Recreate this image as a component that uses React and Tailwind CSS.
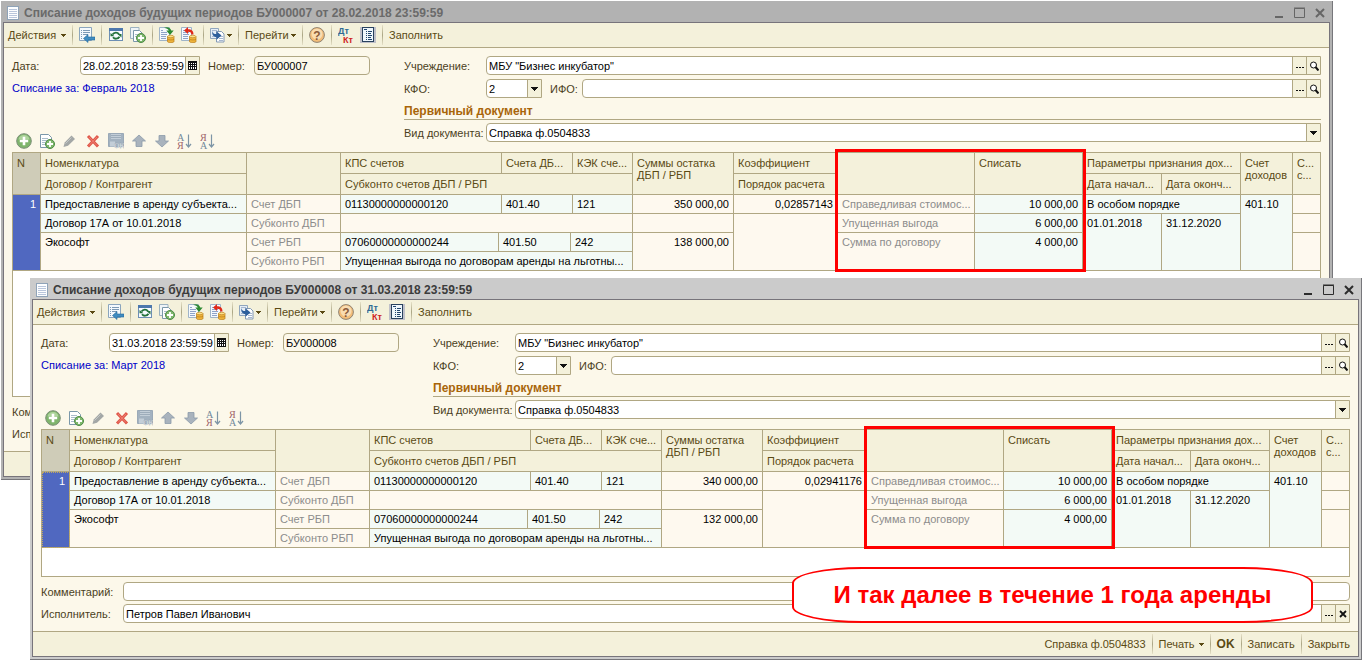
import React, { useId } from 'react';
import clsx from 'clsx';

const documents = [
  {
    title: 'Списание доходов будущих периодов БУ000007 от 28.02.2018 23:59:59',
    date: '28.02.2018 23:59:59',
    number: 'БУ000007',
    period: 'Списание за: Февраль 2018',
    balances: ['350 000,00', '138 000,00'],
    ratio: '0,02857143',
  },
  {
    title: 'Списание доходов будущих периодов БУ000008 от 31.03.2018 23:59:59',
    date: '31.03.2018 23:59:59',
    number: 'БУ000008',
    period: 'Списание за: Март 2018',
    balances: ['340 000,00', '132 000,00'],
    ratio: '0,02941176',
  },
];

/* ---------- Icons ---------- */

const Svg = ({ children, size = 16, className }) => (
  <svg viewBox={`0 0 ${size} ${size}`} width={size} height={size} className={clsx('shrink-0', className)} aria-hidden="true">
    {children}
  </svg>
);

const Caret = () => (
  <svg viewBox="0 0 5 3" width="5" height="3" className="shrink-0" aria-hidden="true">
    <path d="M0 0h5v1H0zM1 1h3v1H1zM2 2h1v1H2z" fill="currentColor" />
  </svg>
);

const SheetIcon = () => (
  <Svg size={14}>
    <rect x="1.5" y="0.5" width="11" height="13" fill="#fdfeff" stroke="#8fa3b8" />
    <path d="M3 3.5h8M3 5.5h8M3 7.5h8M3 9.5h8M3 11.5h8" stroke="#b9c6dc" />
  </Svg>
);

const FormArrowIcon = () => (
  <Svg>
    <path d="M.5.5h12v13H.5z" fill="#f4f9fd" stroke="#8aa5bd" />
    <path d="M2 3.5h1M4 3.5h7M2 5.5h1M4 5.5h7M2 7.500h1M4 7.500h5M2 9.500h1M2 11.500h1" stroke="#7d9ab5" />
    <path d="M4.500 11.500L9 7.500v2.500h7v3H9v2.500z" fill="#3f8cc0" stroke="#22689c" strokeWidth=".6" />
  </Svg>
);

const RefreshIcon = () => (
  <Svg>
    <rect x="1.5" y="1.5" width="13" height="12" fill="#f7fbff" stroke="#6d8fb4" />
    <path d="M1 1h14v3H1z" fill="#4d78ad" />
    <path d="M4.500 7.500C6 5 9.500 5 11 7.200" fill="none" stroke="#23713a" strokeWidth="1.800" />
    <path d="M2.500 9.300V6L6.500 9.300zM13.500 7v3.500L9.500 7z" fill="#23713a" />
    <path d="M11.500 9.800C10 12.300 6.500 12.300 5 10.200" fill="none" stroke="#23713a" strokeWidth="1.800" />
  </Svg>
);

const DocPlusIcon = ({ stacked }) => (
  <Svg>
    {stacked && <path d="M.5.5h8.500v11H.5z" fill="#eef4f7" stroke="#9cb2c0" />}
    {stacked ? (
      <path d="M3.5 3.5h6l3 3v8h-9z" fill="#fff" stroke="#7b98aa" />
    ) : (
      <path d="M1.5 1.5h8l3 3v10h-11z" fill="#fff" stroke="#7b98aa" />
    )}
    <path d={stacked ? 'M5 7.500h4M5 9.500h2' : 'M3 5.500h6M3 7.500h5M3 9.500h3M3 11.500h3'} stroke="#a9bccb" />
    <circle cx="11" cy="11" r="4.500" fill="#7fb86c" stroke="#4c8a45" />
    <path d="M11 8v6M8 11h6" stroke="#fff" strokeWidth="1.800" />
  </Svg>
);

const PostIcon = ({ cancel }) => (
  <Svg>
    <path d="M.5.5h10v13H.5z" fill="#f5f9fd" stroke="#9fb4c8" />
    <path d="M2 3.500h2M2 5.500h6M2 7.500h6M2 9.500h5M2 11.500h5" stroke="#8ea3c9" />
    <path d="M8.500 9.500H15v5c0 1.500-6.500 1.500-6.500 0z" fill="#eeb43c" stroke="#b97a14" strokeWidth=".7" />
    <ellipse cx="11.700" cy="9.500" rx="3.200" ry="1.200" fill="#fbe08b" stroke="#b97a14" strokeWidth=".6" />
    <path d="M8.500 12.200c1 1 5.500 1 6.500 0" fill="none" stroke="#b97a14" strokeWidth=".7" />
    {cancel ? (
      <path d="M3 3.500L7 0v2.200c3.500 0 5.500 1.500 5.500 5.300h-2.200C10.300 5.500 9.300 4.800 7 4.800V7z" fill="#e02818" />
    ) : (
      <path d="M5 .8c3.500-1.500 6.800.2 7.200 2.700h2.500L11 8 7.300 3.500h2.500C9.200 2 7.500 1.500 5 .8z" fill="#2d8a32" />
    )}
  </Svg>
);

const BasedOnIcon = () => (
  <Svg>
    <path d="M.5 1.500h8v10h-8z" fill="#e6eef6" stroke="#8fa5bd" />
    <path d="M2 3.500h5M2 9.500h3" stroke="#a6b7cf" />
    <path d="M6.500 4.500h5l2.500 2.500v8h-7.500z" fill="#fff" stroke="#8299b5" />
    <path d="M9 9.500h4M9 11.500h4M9 13.500h4" stroke="#a6b7cf" />
    <path d="M2.500 4c.2 2.500 1.500 3 4 3V4.200L11.500 8.500l-5 4.300V10C3.500 10 1.500 7.500 2.500 4z" fill="#2d5f9c" />
  </Svg>
);

const HelpIcon = () => (
  <Svg>
    <circle cx="8" cy="8" r="7.400" fill="#f3bd78" stroke="#8f8373" />
    <circle cx="8" cy="7" r="5.500" fill="#f9dcb0" />
    <text x="8" y="12.500" textAnchor="middle" fontSize="12" fontWeight="700" fontFamily="Liberation Sans, sans-serif" fill="#8a5a3a">?</text>
  </Svg>
);

const DtKtIcon = () => (
  <Svg>
    <text x="0" y="7" fontSize="9" fontWeight="700" fontFamily="Liberation Sans, sans-serif" fill="#2f6a94">Дт</text>
    <text x="5" y="16" fontSize="9" fontWeight="700" fontFamily="Liberation Sans, sans-serif" fill="#cf1f1f">Кт</text>
  </Svg>
);

const StructureIcon = () => (
  <Svg>
    <rect width="16" height="16" fill="#bfc0c9" />
    <rect x="2.500" y=".5" width="11" height="14" fill="#eef6fc" stroke="#28415e" />
    <path d="M4 2.500h3M6 4.500h1M8 4.500h4M6 6.500h1M8 6.500h3M6 8.500h1M8 8.500h4M6 10.500h1M8 10.500h3M6 12.500h1M8 12.500h4" stroke="#22466e" />
  </Svg>
);

const AddIcon = () => (
  <Svg>
    <circle cx="8" cy="8" r="7.300" fill="#7fb56c" stroke="#7c8f78" />
    <path d="M2.500 6.500a5.600 5.600 0 0 1 11 0z" fill="#aed49c" />
    <path d="M8 3.800v8.400M3.800 8h8.400" stroke="#fff" strokeWidth="2.600" />
  </Svg>
);

const PencilIcon = () => (
  <Svg>
    <path d="M1.500 14l1.200-4.500L9.500 2.500 13 6l-7 6.800z" fill="#a3a7a6" />
    <path d="M3.500 10.500l6-6" stroke="#c4c8c7" />
  </Svg>
);

const DeleteIcon = () => (
  <Svg>
    <path d="M3 3l10 10.500M13 3L3 13.500" stroke="#e0584a" strokeWidth="3" />
    <path d="M4 4l8 8.500M12 4l-8 8.500" stroke="#f08a7e" strokeWidth=".8" />
  </Svg>
);

const FinishEditIcon = () => (
  <Svg>
    <path d="M.5.500h15v13H.5z" fill="#a3b2c0" stroke="#9aa9b7" />
    <path d="M3 1h10v5H3z" fill="#c3ced8" />
    <path d="M3 2.500h10M3 4.500h10" stroke="#9dacba" />
    <path d="M2 8.500h5v5H2z" fill="#c3ced8" />
    <text x="6" y="15" fontSize="7" fontWeight="700" fontFamily="Liberation Sans, sans-serif" fill="#eef2f5" stroke="#8b9aa9" strokeWidth=".3">OK</text>
  </Svg>
);

const MoveIcon = ({ down }) => (
  <Svg className={down && 'rotate-180'}>
    <path d="M8 2l6.500 6H11v5.500H5V8H1.500z" fill="#a9b3bd" stroke="#8b9aa9" strokeWidth=".8" />
  </Svg>
);

const SortIcon = ({ desc }) => (
  <Svg>
    <text x="0" y="7.500" fontSize="10" fontFamily="Liberation Serif, serif" fill={desc ? '#a0646a' : '#71889a'}>{desc ? 'Я' : 'А'}</text>
    <text x="0" y="15.500" fontSize="10" fontFamily="Liberation Serif, serif" fill={desc ? '#71889a' : '#a0646a'}>{desc ? 'А' : 'Я'}</text>
    <path d="M11.500 1.500v12M9 11l2.500 3 2.500-3" fill="none" stroke="#7d95a6" strokeWidth="1.200" />
  </Svg>
);

const CalendarIcon = () => (
  <Svg size={9}>
    <path d="M0 0h9v9H0z" fill="#111" />
    <path d="M1 2h1v1H1zM3 2h1v1H3zM5 2h1v1H5zM7 2h1v1H7zM1 4h1v1H1zM3 4h1v1H3zM5 4h1v1H5zM7 4h1v1H7zM1 6h1v2H1zM3 6h1v2H3zM5 6h1v2H5zM7 6h1v2H7z" fill="#fff" />
  </Svg>
);

const LensIcon = () => (
  <Svg size={10}>
    <circle cx="4.500" cy="4" r="3" fill="#fff" stroke="#111" strokeWidth="1" />
    <path d="M6.500 6L9.500 9.500" stroke="#111" strokeWidth="2" />
  </Svg>
);

const DotsIcon = () => (
  <Svg size={8}>
    <path d="M0 5h2v1H0zM3 5h2v1H3zM6 5h2v1H6z" fill="#111" />
  </Svg>
);

const ClearIcon = () => (
  <Svg size={8}>
    <path d="M1 1l6 6M7 1L1 7" stroke="#111" strokeWidth="1.800" />
  </Svg>
);

const DropIcon = () => (
  <Svg size={7}>
    <path d="M0 2h7v1H0zM1 3h5v1H1zM2 4h3v1H2zM3 5h1v1H3z" fill="#111" />
  </Svg>
);

/* ---------- Form controls ---------- */

const Separator = () => <span className="mx-1.5 h-5 w-px shrink-0 bg-linear-to-b from-[#e6e1c8] via-[#aaa584] to-[#e6e1c8]" />;

const ToolButton = ({ label, children, className }) => (
  <button type="button" aria-label={label} className={clsx('flex shrink-0 items-center justify-between', className)}>
    {children}
  </button>
);

const Field = ({ id, value = '', readOnly, rounded, buttons = [], className }) => (
  <div
    className={clsx(
      'flex h-[19px] min-w-0 overflow-hidden border border-[#b0a783]',
      rounded ? 'rounded' : 'rounded-l',
      readOnly ? 'bg-[#fcf8ea]' : 'bg-white',
      className
    )}
  >
    <input id={id} type="text" defaultValue={value} readOnly={readOnly} className="min-w-0 flex-1 bg-transparent pl-0.5 text-black outline-none" />
    {buttons.map(([label, Icon]) => (
      <button key={label} type="button" aria-label={label} className="flex w-3.5 shrink-0 items-center justify-center border-l border-[#b0a783] bg-[#f4f1db]">
        <Icon />
      </button>
    ))}
  </div>
);

const SelectField = ({ id, value, className }) => (
  <div className={clsx('grid h-[19px] overflow-hidden rounded-l border border-[#b0a783] bg-white', className)}>
    <select id={id} defaultValue={value} className="col-start-1 row-start-1 appearance-none bg-transparent pl-0.5 text-black outline-none">
      <option>{value}</option>
    </select>
    <span className="pointer-events-none col-start-1 row-start-1 flex w-3.5 items-center justify-center justify-self-end border-l border-[#b0a783] bg-[#f4f1db]">
      <DropIcon />
    </span>
  </div>
);

const lookup = [['Выбрать', DotsIcon], ['Открыть', LensIcon]];

/* ---------- Tabular section ---------- */

const Th = ({ children, className, ...rest }) => (
  <th {...rest} className={clsx('overflow-hidden border-b border-[#b0a783] px-1 text-left align-top font-normal whitespace-nowrap', className || 'border-r bg-[#f4f1db] pt-1')}>
    {children}
  </th>
);

const tones = {
  edit: 'border-r bg-[#f3faf6] text-black',
  plain: 'border-r bg-[#fef9ef] text-black',
  hint: 'border-r bg-[#fef9ef] text-[#8c8c8c]',
  last: 'bg-[#fef9ef]',
};

const Td = ({ children, tone = 'plain', right, ...rest }) => (
  <td {...rest} className={clsx('h-[19px] overflow-hidden border-b border-[#b0a783] px-1 pt-[3px] align-top whitespace-nowrap', tones[tone], right && 'text-right')}>
    {children}
  </td>
);

const WriteOffTable = ({ doc, active }) => (
  <table className="w-full table-fixed border-separate border-spacing-0 leading-3">
    <colgroup>
      <col className="w-7" />
      <col />
      <col className="w-[94px]" />
      <col className="w-[158px]" />
      <col className="w-[3px]" />
      <col className="w-[69px]" />
      <col className="w-[2px]" />
      <col className="w-[60px]" />
      <col className="w-[101px]" />
      <col className="w-[104px]" />
      <col className="w-[137px]" />
      <col className="w-[108px]" />
      <col className="w-[79px]" />
      <col className="w-[79px]" />
      <col className="w-[52px]" />
      <col className="w-[27px]" />
    </colgroup>
    <thead className="text-[#5a4a14]">
      <tr className="h-[21px]">
        <Th rowSpan={2} className="border-r bg-[#cfccb8] pt-1">N</Th>
        <Th>Номенклатура</Th>
        <Th rowSpan={2} />
        <Th colSpan={2}>КПС счетов</Th>
        <Th colSpan={2}>Счета ДБ...</Th>
        <Th>КЭК сче...</Th>
        <Th rowSpan={2}>Суммы остатка<br />ДБП / РБП</Th>
        <Th>Коэффициент</Th>
        <Th rowSpan={2} />
        <Th rowSpan={2}>Списать</Th>
        <Th colSpan={2}>Параметры признания дох...</Th>
        <Th rowSpan={2}>Счет<br />доходов</Th>
        <Th rowSpan={2} className="bg-[#f4f1db] pt-1">С...<br />с...</Th>
      </tr>
      <tr className="h-[21px]">
        <Th>Договор / Контрагент</Th>
        <Th colSpan={5}>Субконто счетов ДБП / РБП</Th>
        <Th>Порядок расчета</Th>
        <Th>Дата начал...</Th>
        <Th>Дата оконч...</Th>
      </tr>
    </thead>
    <tbody>
      <tr>
        <td
          rowSpan={4}
          className={clsx(
            'border-r border-b border-[#b0a783] bg-[#5068c0] px-1 pt-[3px] text-right align-top text-white',
            active && 'outline-1 -outline-offset-1 outline-dotted outline-[#c0a860]'
          )}
        >
          1
        </td>
        <Td tone="edit">Предоставление в аренду субъекта...</Td>
        <Td tone="hint">Счет ДБП</Td>
        <Td tone="edit" colSpan={2}>01130000000000120</Td>
        <Td tone="edit" colSpan={2}>401.40</Td>
        <Td tone="edit">121</Td>
        <Td right>{doc.balances[0]}</Td>
        <Td right>{doc.ratio}</Td>
        <Td tone="hint">Справедливая стоимос...</Td>
        <Td tone="edit" right>10 000,00</Td>
        <Td tone="edit" colSpan={2}>В особом порядке</Td>
        <Td tone="edit" rowSpan={4}>401.10</Td>
        <Td tone="last" />
      </tr>
      <tr>
        <Td tone="edit">Договор 17А от 10.01.2018</Td>
        <Td tone="hint">Субконто ДБП</Td>
        <Td colSpan={5} />
        <Td />
        <Td rowSpan={3} />
        <Td tone="hint">Упущенная выгода</Td>
        <Td tone="edit" right>6 000,00</Td>
        <Td tone="edit" rowSpan={3}>01.01.2018</Td>
        <Td tone="edit" rowSpan={3}>31.12.2020</Td>
        <Td tone="last" />
      </tr>
      <tr>
        <Td rowSpan={2}>Экософт</Td>
        <Td tone="hint">Счет РБП</Td>
        <Td tone="edit">07060000000000244</Td>
        <Td tone="edit" colSpan={2}>401.50</Td>
        <Td tone="edit" colSpan={2}>242</Td>
        <Td rowSpan={2} right>{doc.balances[1]}</Td>
        <Td tone="hint" rowSpan={2}>Сумма по договору</Td>
        <Td tone="edit" rowSpan={2} right>4 000,00</Td>
        <Td tone="last" rowSpan={2} />
      </tr>
      <tr>
        <Td tone="hint">Субконто РБП</Td>
        <Td tone="edit" colSpan={5}>Упущенная выгода по договорам аренды на льготны...</Td>
      </tr>
    </tbody>
  </table>
);

/* ---------- Document window ---------- */

const DocumentWindow = ({ doc, active, spacer, className }) => {
  const id = useId();

  return (
    <section className={clsx('col-start-1 row-start-1 self-start border-r border-b border-[#77777b] px-0.5 pb-0.5', active ? 'bg-[#cbcbcb]' : 'bg-[#b2b2b2]', className)}>
      <header className={clsx('flex h-[21px] items-center pt-0.5 pr-1 pl-[3px]', active ? 'text-[#2c2c2c]' : 'text-[#666]')}>
        <SheetIcon />
        <h1 className={clsx('ml-1 flex-1 text-xs font-bold whitespace-nowrap', active ? 'text-[#3c3c3c]' : 'text-[#6a6a6a]')}>{doc.title}</h1>
        <div className="flex items-center gap-2">
          <button type="button" aria-label="Свернуть">
            <Svg size={12}><path d="M1 9h8v2H1z" fill="currentColor" /></Svg>
          </button>
          <button type="button" aria-label="Развернуть">
            <Svg size={12}><path d="M.5 1.500h10v9H.5zM0 1h11" fill="none" stroke="currentColor" /></Svg>
          </button>
          <button type="button" aria-label="Закрыть окно">
            <Svg size={12}><path d="M2 2l8 8M10 2l-8 8" stroke="currentColor" strokeWidth="2" /></Svg>
          </button>
        </div>
      </header>

      <div className="border border-[#77747b] bg-[#fcf8ea] text-[#4b3f1c]">
        <div className="flex h-[25px] items-center border-b border-[#b0a783] bg-[#f4f1db] pl-1 text-[#5a4a14]">
          <ToolButton className="w-[58px]">Действия <Caret /></ToolButton>
          <Separator />
          <ToolButton label="Перейти к списку"><FormArrowIcon /></ToolButton>
          <Separator />
          <div className="flex gap-1.5">
            <ToolButton label="Перечитать"><RefreshIcon /></ToolButton>
            <ToolButton label="Скопировать"><DocPlusIcon stacked /></ToolButton>
          </div>
          <Separator />
          <div className="flex gap-1.5">
            <ToolButton label="Провести"><PostIcon /></ToolButton>
            <ToolButton label="Отмена проведения"><PostIcon cancel /></ToolButton>
          </div>
          <Separator />
          <ToolButton label="Ввести на основании" className="w-[22px]"><BasedOnIcon /><Caret /></ToolButton>
          <Separator />
          <ToolButton className="w-[51px]">Перейти <Caret /></ToolButton>
          <Separator />
          <ToolButton label="Справка"><HelpIcon /></ToolButton>
          <Separator />
          <div className="flex gap-1.5">
            <ToolButton label="Проводки"><DtKtIcon /></ToolButton>
            <ToolButton label="Структура"><StructureIcon /></ToolButton>
          </div>
          <Separator />
          <ToolButton>Заполнить</ToolButton>
        </div>

        <div className="px-2 pt-2 pb-2">
          <div className="flex">
            <div className="flex w-[392px] shrink-0 flex-col">
              <div className="flex items-center">
                <label htmlFor={`${id}-date`} className="w-[68px]">Дата:</label>
                <Field id={`${id}-date`} value={doc.date} buttons={[['Календарь', CalendarIcon]]} className="w-[120px]" />
                <label htmlFor={`${id}-number`} className="ml-2 w-[46px]">Номер:</label>
                <Field id={`${id}-number`} value={doc.number} readOnly rounded className="w-[116px]" />
              </div>
              <a href="#period" className="mt-1 self-start leading-[19px] text-[#0000c8]">{doc.period}</a>
              <div className="mt-auto ml-1 flex gap-[7px]">
                <ToolButton label="Добавить"><AddIcon /></ToolButton>
                <ToolButton label="Добавить копированием"><DocPlusIcon /></ToolButton>
                <ToolButton label="Изменить"><PencilIcon /></ToolButton>
                <ToolButton label="Удалить"><DeleteIcon /></ToolButton>
                <ToolButton label="Закончить редактирование"><FinishEditIcon /></ToolButton>
                <ToolButton label="Переместить вверх"><MoveIcon /></ToolButton>
                <ToolButton label="Переместить вниз"><MoveIcon down /></ToolButton>
                <ToolButton label="Сортировать по возрастанию"><SortIcon /></ToolButton>
                <ToolButton label="Сортировать по убыванию"><SortIcon desc /></ToolButton>
              </div>
            </div>

            <div className="min-w-0 flex-1 pb-[7px]">
              <div className="flex items-center">
                <label htmlFor={`${id}-org`} className="w-[82px]">Учреждение:</label>
                <Field id={`${id}-org`} value={'МБУ "Бизнес инкубатор"'} buttons={lookup} className="flex-1" />
              </div>
              <div className="mt-1 flex items-center">
                <label htmlFor={`${id}-kfo`} className="w-[82px]">КФО:</label>
                <SelectField id={`${id}-kfo`} value="2" className="w-14" />
                <label htmlFor={`${id}-ifo`} className="ml-2 w-8">ИФО:</label>
                <Field id={`${id}-ifo`} buttons={lookup} className="flex-1" />
              </div>
              <h2 className="mt-1 mb-[3px] h-[18px] border-b border-[#b0a783] text-xs leading-[18px] font-bold text-[#a8650a]">Первичный документ</h2>
              <div className="flex items-center">
                <label htmlFor={`${id}-kind`} className="w-[82px] whitespace-nowrap">Вид документа:</label>
                <SelectField id={`${id}-kind`} value="Справка ф.0504833" className="flex-1" />
              </div>
            </div>
          </div>

          <div className="relative mt-[3px] border border-[#b0a783] bg-white">
            <WriteOffTable doc={doc} active={active} />
            <div className={spacer} />
            <div className="pointer-events-none absolute -top-1 right-[234px] h-[123px] w-[251px] border-3 border-[#ff0000]" />
          </div>

          <div className="mt-[5px] grid grid-cols-[82px_minmax(0,1fr)] items-center gap-y-[3px]">
            <label htmlFor={`${id}-comment`}>Комментарий:</label>
            <Field id={`${id}-comment`} rounded />
            <label htmlFor={`${id}-author`}>Исполнитель:</label>
            <Field id={`${id}-author`} value="Петров Павел Иванович" buttons={[['Выбрать', DotsIcon], ['Очистить', ClearIcon]]} />
          </div>
        </div>

        <footer className="flex h-[25px] items-center justify-end border-t border-[#b0a783] bg-[#f4f1db] pr-2 text-[#5a4a14]">
          <ToolButton>Справка ф.0504833</ToolButton>
          <Separator />
          <ToolButton className="gap-1">Печать <Caret /></ToolButton>
          <Separator />
          <ToolButton className="text-xs font-bold">OK</ToolButton>
          <Separator />
          <ToolButton>Записать</ToolButton>
          <Separator />
          <ToolButton>Закрыть</ToolButton>
        </footer>
      </div>
    </section>
  );
};

export default function App() {
  return (
    <main className="relative grid min-w-[1200px] bg-white font-['Liberation_Sans',Arial,sans-serif] text-[11px] leading-3">
      <DocumentWindow doc={documents[0]} spacer="h-[125px]" className="mt-px mr-[29px] ml-px" />
      <DocumentWindow doc={documents[1]} active spacer="h-7" className="z-10 mt-[278px] ml-[30px]" />
      <p className="absolute right-[49px] bottom-[37px] z-20 flex h-14 w-[521px] items-center justify-center rounded-[70px/16px] border-2 border-[#ff0000] bg-white text-2xl font-bold whitespace-nowrap text-[#ff0000]">
        И так далее в течение 1 года аренды
      </p>
    </main>
  );
}
